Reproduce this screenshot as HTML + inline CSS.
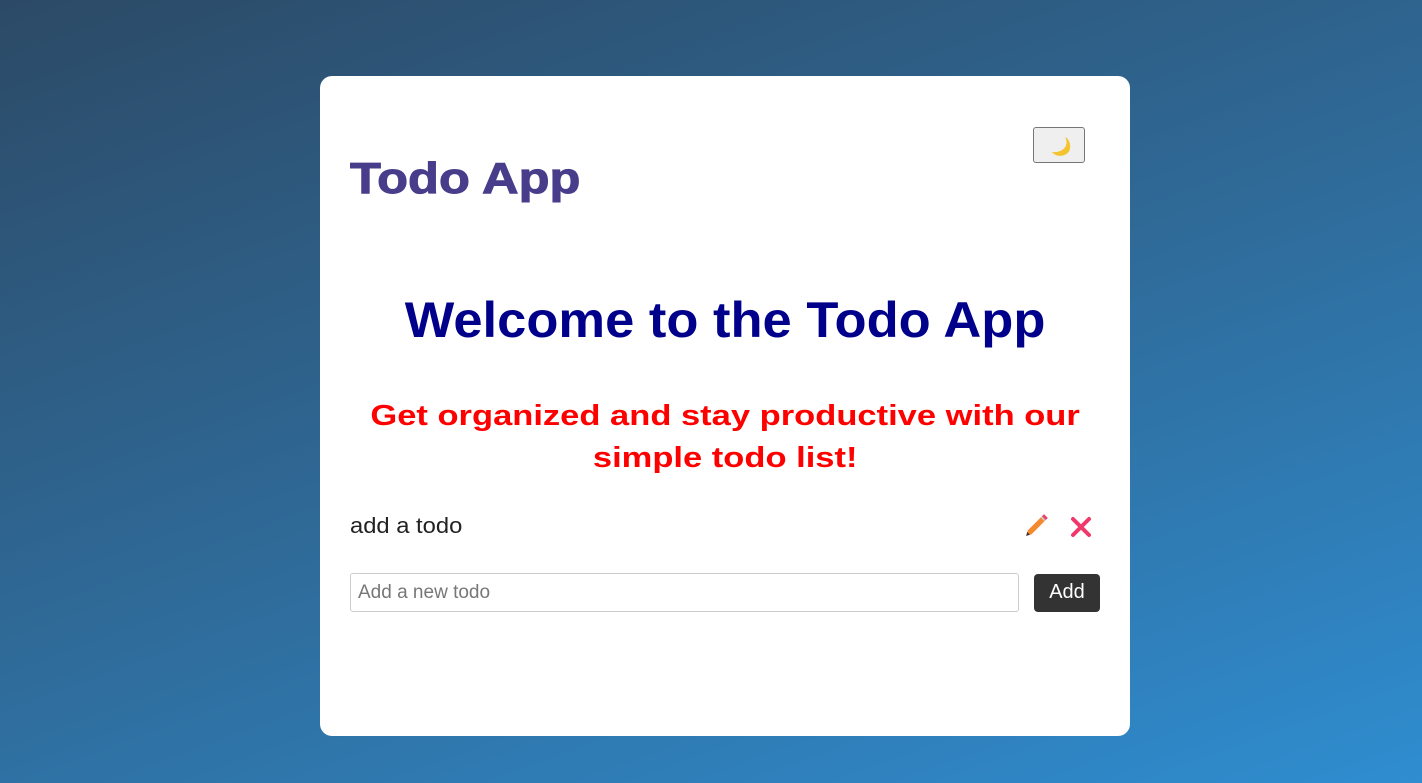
<!DOCTYPE html>
<html><head><style>
html,body{margin:0;height:783px;overflow:hidden}
body{background:linear-gradient(160deg,#2c4a66 0%,#2f6a98 50%,#2f8dd0 100%);font-family:"Liberation Sans",Arial,sans-serif;position:relative}
.card{position:absolute;left:320px;top:76px;width:810px;height:660px;background:#fff;border-radius:12px}
h1{position:absolute;left:30px;top:78px;margin:0;font-size:44px;font-weight:bold;color:#483d8b;line-height:50px;transform:scaleX(1.15);transform-origin:0 0;-webkit-text-stroke:1px #483d8b}
.moon{position:absolute;left:713px;top:51px;width:52px;height:36px;border:1px solid #767676;border-radius:3px;background:#efefef;box-sizing:border-box}
h2{position:absolute;left:0;width:810px;top:214px;margin:0;text-align:center;font-size:50px;font-weight:bold;color:#00008b;line-height:60px}
h2 span{display:inline-block;transform:scaleX(1.05)}
.sub{position:absolute;left:0;width:810px;top:319px;text-align:center;font-size:29px;font-weight:bold;color:#f00;line-height:42px}
.sub span{display:inline-block;transform:scaleX(1.19);white-space:nowrap}
.item{position:absolute;left:30px;top:437px;font-size:22px;color:#222;transform:scaleX(1.08);transform-origin:0 0}
input{position:absolute;left:30px;top:497px;width:669px;height:39px;box-sizing:border-box;border:1px solid #ccc;border-radius:3px;font-size:19px;padding:0 7px;font-family:inherit}
input::placeholder{color:#777}
.add{position:absolute;left:714px;top:498px;width:66px;height:38px;background:#333;color:#fff;border-radius:4px;font-size:20px;text-align:center;line-height:37px}
</style></head><body>
<div class="card">
<h1>Todo App</h1>
<div class="moon"><svg width="52" height="36" viewBox="0 0 52 36"><path d="M31 9 C35 16 31 25 18 24 C22 30 34 29 36 21 C37 15 34 10 31 9Z" fill="#f4c430"/></svg></div>
<h2><span>Welcome to the Todo App</span></h2>
<div class="sub"><span>Get organized and stay productive with our</span><br><span>simple todo list!</span></div>
<div class="item">add a todo</div>
<svg style="position:absolute;left:704px;top:436px" width="26" height="26" viewBox="0 0 24 24"><path d="M2 22 L3.5 17 L16 4.5 L19.5 8 L7 20.5Z" fill="#f4892f"/><path d="M16 4.5 L18.5 2 L22 5.5 L19.5 8Z" fill="#e8456b"/><path d="M16 4.5 L19.5 8" stroke="#ccc" stroke-width="1.5"/><path d="M2 22 L3 18.5 L5.5 21Z" fill="#333"/></svg>
<svg style="position:absolute;left:749px;top:439px" width="24" height="24" viewBox="0 0 24 24"><path d="M4 4 L20 20 M20 4 L4 20" stroke="#f0386b" stroke-width="4" stroke-linecap="round"/></svg>
<input placeholder="Add a new todo">
<div class="add">Add</div>
</div>
</body></html>
